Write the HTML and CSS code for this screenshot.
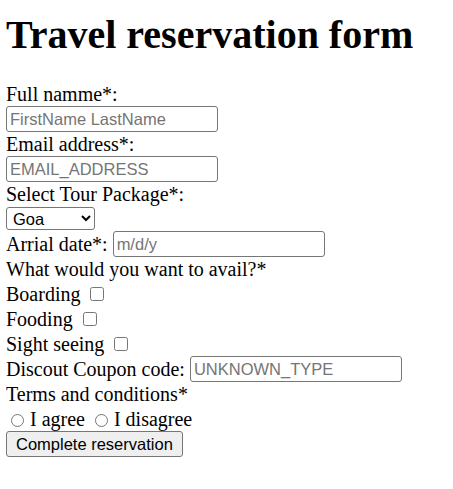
FILE: index.html
```html
<!DOCTYPE html>
<html>
<head>
<meta charset="utf-8">
<title>Travel reservation form</title>
<link rel="stylesheet" href="styles.css">
</head>
<body>
<h1 class="title">Travel reservation form</h1>
<form class="form">
<label class="lbl">Full namme*:</label><br>
<input class="field" type="text" placeholder="FirstName LastName"><br>
<label class="lbl">Email address*:</label><br>
<input class="field" type="text" placeholder="EMAIL_ADDRESS"><br>
<label class="lbl">Select Tour Package*:</label><br>
<select class="pick"><option>Goa</option><option>Kerala</option><option>Manali</option></select><br>
<label class="lbl">Arrial date*:</label> <input class="field" type="text" placeholder="m/d/y"><br>
What would you want to avail?*<br>
Boarding <input class="chk" type="checkbox"><br>
Fooding <input class="chk" type="checkbox"><br>
Sight seeing <input class="chk" type="checkbox"><br>
Discout Coupon code: <input class="field" type="text" placeholder="UNKNOWN_TYPE"><br>
Terms and conditions*<br>
<input class="rad" type="radio" name="t"> I agree <input class="rad" type="radio" name="t"> I disagree<br>
<button class="btn" type="button">Complete reservation</button>
</form>
</body>
</html>
```
FILE: styles.css
```css
body {
  margin: 0 0 0 6px;
  font-family: "Liberation Serif", "Times New Roman", serif;
  font-size: 20px;
  line-height: 25px;
  color: #000;
  background: #fff;
}
.title {
  font-size: 40px;
  line-height: 46px;
  font-weight: bold;
  margin: 12px 0 24px;
}
.form { margin: 0; }
.field {
  box-sizing: border-box;
  width: 212px;
  height: 26px;
  margin: -1px 0 0;
  padding: 1px 3px;
  border: 1px solid #767676;
  border-radius: 3px;
  font-family: "Liberation Sans", Arial, sans-serif;
  font-size: 16.5px;
  color: #000;
  background: #fff;
  vertical-align: top;
}
.field::placeholder { color: #757575; }
.pick {
  box-sizing: border-box;
  width: 89px;
  height: 23px;
  margin: 0;
  padding: 0 0 0 2px;
  border: 1px solid #767676;
  border-radius: 3px;
  font-family: "Liberation Sans", Arial, sans-serif;
  font-size: 16.5px;
  color: #000;
  background: #fff;
  vertical-align: top;
}
.chk {
  width: 14px;
  height: 14px;
  margin: 0 4px 0 5px;
  vertical-align: 0;
}
.rad {
  width: 13px;
  height: 13px;
  margin: 0 1px 0 5px;
  vertical-align: -1px;
}
.btn {
  box-sizing: border-box;
  height: 26px;
  margin: -1px 0 0;
  padding: 1px 9px;
  border: 1px solid #767676;
  border-radius: 3px;
  background: #efefef;
  font-family: "Liberation Sans", Arial, sans-serif;
  font-size: 16.5px;
  color: #000;
  vertical-align: top;
}
```
